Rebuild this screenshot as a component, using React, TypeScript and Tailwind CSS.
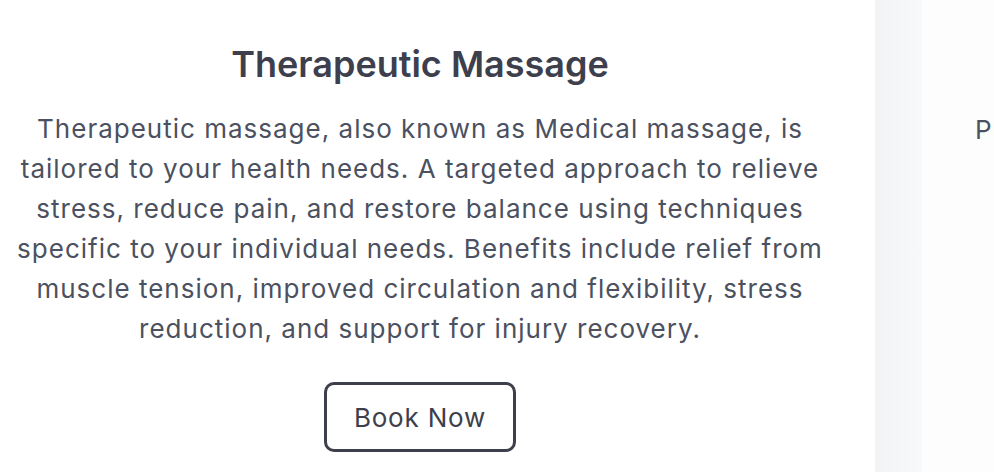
import React from "react";

export default function App() {
  return (
    <div className="w-[994px] h-[472px] overflow-hidden bg-white flex" style={{ fontFamily: "Inter, 'Noto Sans', sans-serif" }}>
      <div className="w-[875px] shrink-0 bg-white pr-[35px] pt-[42px] flex flex-col items-center">
        <h2 className="text-[36px] leading-[44px] font-semibold text-[#3d404c]">Therapeutic Massage</h2>
        <p className="mt-[23px] text-[26px] leading-[40px] tracking-[1px] text-[#4b5160] text-center w-[816px]">
          Therapeutic massage, also known as Medical massage, is tailored to your health needs. A targeted approach to relieve stress, reduce pain, and restore balance using techniques specific to your individual needs. Benefits include relief from muscle tension, improved circulation and flexibility, stress reduction, and support for injury recovery.
        </p>
        <button className="mt-[33px] w-[192px] h-[70px] border-[3px] border-[#3d404c] rounded-[10px] text-[26px] tracking-[0.8px] text-[#3d404c] bg-white">
          Book Now
        </button>
      </div>
      <div className="w-[47px] shrink-0 bg-gradient-to-r from-[#f2f3f5] to-[#f8f9fa]" />
      <div className="flex-1 min-w-0 overflow-hidden bg-[#fdfdfd] pt-[110px] pl-[53px]">
        <p className="text-[26px] leading-[40px] tracking-[1px] text-[#4b5160] whitespace-nowrap">Pure</p>
      </div>
    </div>
  );
}
